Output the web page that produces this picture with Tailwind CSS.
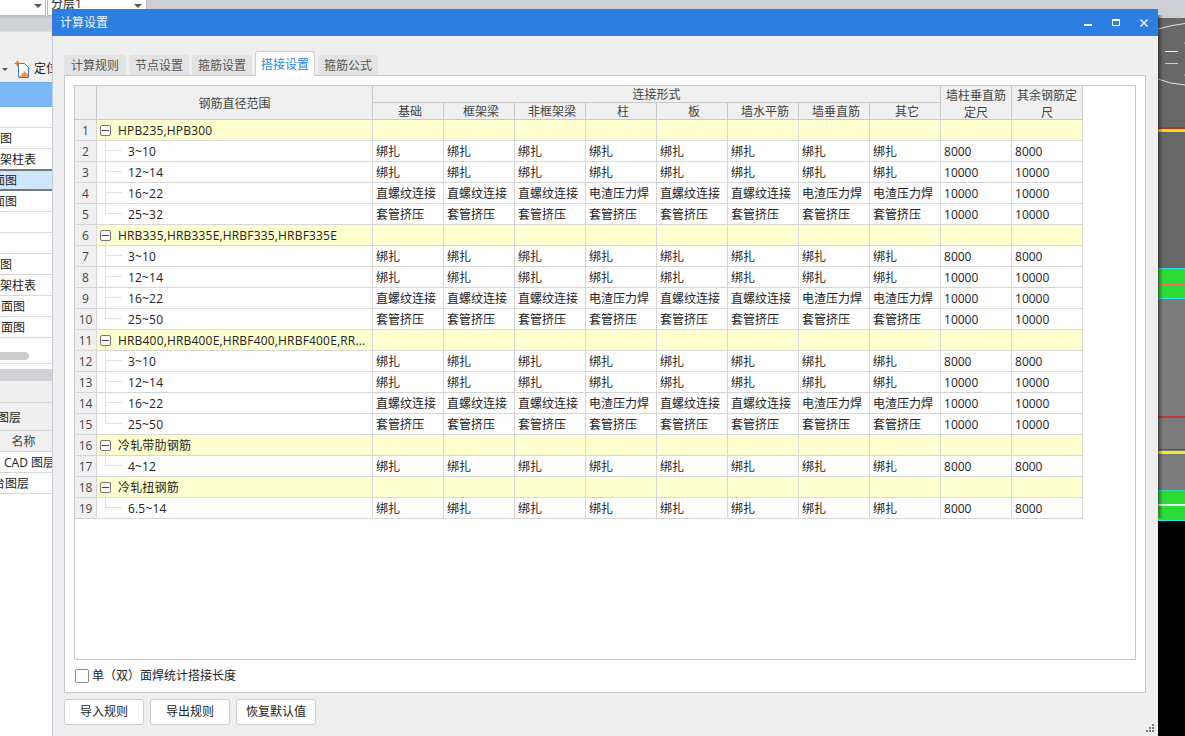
<!DOCTYPE html>
<html lang="zh-CN">
<head>
    <meta charset="UTF-8">
    <title>计算设置</title>
    <script src="https://cdn.jsdelivr.net/npm/@tailwindcss/browser@4"></script>
</head>
<body class="relative w-[1185px] h-[736px] overflow-hidden bg-[#ccced3] text-[12px] text-[#222] font-['Open_Sans','Noto_Sans_CJK_SC',sans-serif]">

    <!-- main app behind the dialog: left panel -->
    <div class="absolute left-0 top-0 w-[52px] h-[736px] overflow-hidden flex flex-col bg-white whitespace-nowrap">
        <div class="h-[18px] shrink-0 bg-white border-b-2 border-[#c4c5ca]"></div>
        <div class="h-[13px] shrink-0 bg-[#d1d2d6]"></div>
        <div class="h-[51px] shrink-0 bg-[#efefef] border-t border-[#dcdcdc] relative">
            <span class="absolute left-[2px] top-[36px] w-0 h-0 border-x-[3px] border-x-transparent border-t-[3px] border-t-[#555]"></span>
            <svg class="absolute left-[14px] top-[28px]" width="16" height="18" viewBox="0 0 16 18">
                <path d="M4.500 3.500h6l4 4v10h-10z" fill="#fff" stroke="#3d7fc4"/>
                <path d="M5 17l5-6 4 3v3z" fill="#f0924a"/>
                <path d="M6 9l4 4M5 12l3 3M9 9l4 4" stroke="#fff" stroke-width=".7"/>
                <path d="M3.500 0l1 2.500 2.500 1-2.500 1-1 2.500-1-2.500-2.500-1 2.500-1z" fill="#f26a1b"/>
            </svg>
            <span class="absolute left-[34px] top-[28px] text-[#222] text-[12px]">定位</span>
        </div>
        <div class="h-[25px] shrink-0 bg-[#7ab8f8] border-y border-[#6eaaea]"></div>
        <div class="h-[21px] shrink-0 border-b border-[#d6d6d6]"></div>
        <div class="h-[21px] shrink-0 border-b border-[#d6d6d6] leading-[21px]">图</div>
        <div class="h-[21px] shrink-0 border-b border-[#d6d6d6] leading-[21px]">架柱表</div>
        <div class="h-[22px] shrink-0 -mt-px border-y-2 border-[#777] bg-[#d0e6fc] leading-[19px] -ml-[7px]">面图</div>
        <div class="h-[21px] shrink-0 border-b border-[#d6d6d6] leading-[21px] -ml-[7px]">面图</div>
        <div class="h-[21px] shrink-0 border-b border-[#d6d6d6]"></div>
        <div class="h-[21px] shrink-0 border-b border-[#d6d6d6]"></div>
        <div class="h-[21px] shrink-0 border-b border-[#d6d6d6] leading-[21px]">图</div>
        <div class="h-[21px] shrink-0 border-b border-[#d6d6d6] leading-[21px]">架柱表</div>
        <div class="h-[21px] shrink-0 border-b border-[#d6d6d6] leading-[21px] pl-[1px]">面图</div>
        <div class="h-[21px] shrink-0 border-b border-[#d6d6d6] leading-[21px] pl-[1px]">面图</div>
        <div class="h-[26px] shrink-0 border-b border-[#d6d6d6] pt-[14px]">
            <div class="w-[29px] h-[8px] rounded-r-full bg-[#cdcdcd]"></div>
        </div>
        <div class="h-[5px] shrink-0"></div>
        <div class="h-[12px] shrink-0 bg-[#d1d2d6]"></div>
        <div class="h-[22px] shrink-0 bg-[#efefef] border-b border-[#d6d6d6]"></div>
        <div class="h-[28px] shrink-0 bg-[#efefef] border-b border-[#d6d6d6] leading-[30px] -ml-[3px]">图层</div>
        <div class="h-[21px] shrink-0 bg-[#f0f0f0] border-b border-[#d6d6d6] leading-[21px] text-center text-[#444] pr-[5px]">名称</div>
        <div class="h-[21px] shrink-0 border-b border-[#d6d6d6] leading-[21px] pl-[4px]">CAD 图层</div>
        <div class="h-[21px] shrink-0 border-b border-[#d6d6d6] leading-[21px] -ml-[7px]">台图层</div>
    </div>

    <!-- combo boxes along the top -->
    <div class="absolute left-0 top-0 w-[46px] h-[16px] bg-white border-r border-b border-[#bbb]">
        <span class="absolute left-[34px] top-[4px] w-0 h-0 border-x-[4px] border-x-transparent border-t-[4px] border-t-[#555]"></span>
    </div>
    <div class="absolute left-[47px] top-0 w-[100px] h-[16px] overflow-hidden bg-white border-x border-b border-[#bbb]">
        <span class="absolute left-[3px] -top-[5px] text-[12px] leading-[18px]">分层1</span>
        <span class="absolute left-[86px] top-[4px] w-0 h-0 border-x-[4px] border-x-transparent border-t-[4px] border-t-[#555]"></span>
    </div>

    <!-- cad canvas on the right -->
    <svg class="absolute left-[1158px] top-0" width="27" height="736" viewBox="0 0 27 736">
        <defs>
            <linearGradient id="shade" x1="0" x2="1" y1="0" y2="0">
                <stop offset="0" stop-color="#000" stop-opacity=".45"/>
                <stop offset="1" stop-color="#000" stop-opacity="0"/>
            </linearGradient>
        </defs>
        <rect y="18" width="27" height="250" fill="#676767"/>
        <rect y="268" width="27" height="252" fill="#7c7c7c"/>
        <rect y="520" width="27" height="216" fill="#000"/>
        <path d="M0 29Q14 25 27 23.500M0 79Q12 84 27 85" fill="none" stroke="#e4e4e4"/>
        <path d="M7 51.500h13" stroke="#f4f4f4"/>
        <path d="M7 63.500h13" stroke="#cfcfcf"/>
        <path d="M26 43h1M26 75h1" stroke="#bbb"/>
        <rect y="127" width="27" height="2" fill="#b4312e"/>
        <rect y="129" width="27" height="3" fill="#e8e020"/>
        <rect y="268" width="27" height="31" fill="#2cdc34"/>
        <rect y="268" width="27" height="1" fill="#30e0e8"/>
        <rect y="298" width="27" height="1" fill="#30e0e8"/>
        <rect y="283" width="27" height="2" fill="#f06a6a"/>
        <rect y="416" width="27" height="2" fill="#b83c3c"/>
        <rect y="449" width="27" height="1" fill="#e01818"/>
        <rect y="451" width="27" height="3" fill="#f4ec20"/>
        <rect y="490" width="27" height="31" fill="#2cdc34"/>
        <rect y="490" width="27" height="1" fill="#30d8b8"/>
        <rect y="520" width="27" height="1" fill="#20e8f0"/>
        <rect y="504" width="27" height="2" fill="#e8f8e8"/>
        <rect y="15" width="5" height="503" fill="url(#shade)"/>
    </svg>

    <!-- dialog -->
    <div class="absolute left-[52px] top-[9px] w-[1106px] h-[727px] flex flex-col bg-[#efefef] border-l border-[#c3cad8]">
        <div class="h-[27px] shrink-0 flex items-center justify-between -ml-px bg-[#2c7ee0] text-[#f0f6ff] pl-[8px]">
            <span>计算设置</span>
            <div class="flex items-center">
                <span class="w-[28px] flex justify-center pt-[4px]"><span class="w-[8px] h-[2px] bg-white"></span></span>
                <span class="w-[28px] flex justify-center"><span class="w-[8px] h-[7px] border border-t-2 border-white"></span></span>
                <svg class="mx-[10px]" width="8" height="8" viewBox="0 0 8 8"><path d="M.5.500l7 7M7.500.500l-7 7" stroke="#fff" stroke-width="1.200"/></svg>
            </div>
        </div>

        <div class="flex-1 flex flex-col pl-[11px] pr-[12px]">
            <!-- tabs -->
            <div class="h-[39px] shrink-0 flex items-end gap-[3px] text-[#555] relative z-10">
                <div class="w-[62px] h-[20px] rounded-t-[3px] bg-[#e3e3e3] text-center leading-[22px]">计算规则</div>
                <div class="w-[60px] h-[20px] rounded-t-[3px] bg-[#e3e3e3] text-center leading-[22px]">节点设置</div>
                <div class="w-[60px] h-[20px] rounded-t-[3px] bg-[#e3e3e3] text-center leading-[22px]">箍筋设置</div>
                <div class="w-[60px] h-[25px] -mb-px rounded-t-[3px] bg-white border-x border-t border-[#cfcfcf] text-[#2b84e6] text-center leading-[25px]">搭接设置</div>
                <div class="w-[60px] h-[20px] rounded-t-[3px] bg-[#e3e3e3] text-center leading-[22px]">箍筋公式</div>
            </div>

            <!-- panel -->
            <div class="h-[618px] shrink-0 flex flex-col bg-white border border-[#c8c8c8] px-[9px] pt-[9px]">
                <div class="h-[575px] shrink-0 border border-[#c8c8c8]">
                    <table class="table-fixed border-separate border-spacing-0 w-[1008px]
                        [&_th]:font-normal [&_th]:text-[#444] [&_th]:bg-[#f0f0f0] [&_th]:border-r [&_th]:border-b [&_th]:border-[#c8c8c8] [&_th]:p-0 [&_th]:pt-[2px] [&_th]:leading-[14px] [&_th]:h-[17px]
                        [&_td]:h-[21px] [&_td]:p-0 [&_td]:pl-[3px] [&_td]:pt-[2px] [&_td]:border-r [&_td]:border-b [&_td]:border-[#d6d6d6] [&_td]:whitespace-nowrap [&_td]:overflow-hidden
                        [&_td:nth-child(1)]:pl-0 [&_td:nth-child(1)]:text-center [&_td:nth-child(1)]:bg-[#f0f0f0] [&_td:nth-child(1)]:text-[#444]
                        [&_td:nth-child(2)]:relative [&_td:nth-child(2)]:pl-[31px] [&_td:nth-child(2)]:tracking-[0.18px]
                        [&_.g_td]:bg-[#ffffcf] [&_.g_td:nth-child(2)]:pl-[21px]
                        [&_i]:absolute [&_i]:left-[8px] [&_i]:top-0 [&_i]:w-[17px] [&_i]:h-[10px] [&_i]:border-l [&_i]:border-b [&_i]:border-[#e0e0e0]
                        [&_s]:absolute [&_s]:left-[8px] [&_s]:top-0 [&_s]:h-full [&_s]:border-l [&_s]:border-[#e0e0e0]
                        [&_.g_s]:top-[16px] [&_.g_s]:h-[5px]
                        [&_b]:absolute [&_b]:left-[3px] [&_b]:top-[5px] [&_b]:w-[11px] [&_b]:h-[11px] [&_b]:bg-white [&_b]:border [&_b]:border-[#777] [&_b]:rounded-[2px] [&_b]:flex [&_b]:items-center [&_b]:justify-center
                        [&_u]:block [&_u]:w-[7px] [&_u]:h-px [&_u]:bg-[#444]">
                        <colgroup>
                            <col class="w-[22px]"><col class="w-[276px]">
                            <col class="w-[71px]"><col class="w-[71px]"><col class="w-[71px]"><col class="w-[71px]"><col class="w-[71px]"><col class="w-[71px]"><col class="w-[71px]"><col class="w-[71px]"><col class="w-[71px]"><col class="w-[71px]">
                        </colgroup>
                        <thead>
                            <tr>
                                <th rowspan="2"></th>
                                <th rowspan="2">钢筋直径范围</th>
                                <th colspan="8" class="pr-[2px]">连接形式</th>
                                <th rowspan="2"><div class="-mt-[2px] h-[32px] leading-[17px]">墙柱垂直筋<br>定尺</div></th>
                                <th rowspan="2"><div class="-mt-[2px] h-[32px] leading-[17px]">其余钢筋定<br>尺</div></th>
                            </tr>
                            <tr class="[&_th]:pl-[4px]"><th>基础</th><th>框架梁</th><th>非框架梁</th><th>柱</th><th>板</th><th>墙水平筋</th><th>墙垂直筋</th><th>其它</th></tr>
                        </thead>
                        <tbody>
                            <tr class="g"><td>1</td><td><s></s><b><u></u></b>HPB235,HPB300</td><td></td><td></td><td></td><td></td><td></td><td></td><td></td><td></td><td></td><td></td></tr>
                            <tr><td>2</td><td><s></s><i></i>3~10</td><td>绑扎</td><td>绑扎</td><td>绑扎</td><td>绑扎</td><td>绑扎</td><td>绑扎</td><td>绑扎</td><td>绑扎</td><td>8000</td><td>8000</td></tr>
                            <tr><td>3</td><td><s></s><i></i>12~14</td><td>绑扎</td><td>绑扎</td><td>绑扎</td><td>绑扎</td><td>绑扎</td><td>绑扎</td><td>绑扎</td><td>绑扎</td><td>10000</td><td>10000</td></tr>
                            <tr><td>4</td><td><s></s><i></i>16~22</td><td>直螺纹连接</td><td>直螺纹连接</td><td>直螺纹连接</td><td>电渣压力焊</td><td>直螺纹连接</td><td>直螺纹连接</td><td>电渣压力焊</td><td>电渣压力焊</td><td>10000</td><td>10000</td></tr>
                            <tr><td>5</td><td><i></i>25~32</td><td>套管挤压</td><td>套管挤压</td><td>套管挤压</td><td>套管挤压</td><td>套管挤压</td><td>套管挤压</td><td>套管挤压</td><td>套管挤压</td><td>10000</td><td>10000</td></tr>
                            <tr class="g"><td>6</td><td><s></s><b><u></u></b>HRB335,HRB335E,HRBF335,HRBF335E</td><td></td><td></td><td></td><td></td><td></td><td></td><td></td><td></td><td></td><td></td></tr>
                            <tr><td>7</td><td><s></s><i></i>3~10</td><td>绑扎</td><td>绑扎</td><td>绑扎</td><td>绑扎</td><td>绑扎</td><td>绑扎</td><td>绑扎</td><td>绑扎</td><td>8000</td><td>8000</td></tr>
                            <tr><td>8</td><td><s></s><i></i>12~14</td><td>绑扎</td><td>绑扎</td><td>绑扎</td><td>绑扎</td><td>绑扎</td><td>绑扎</td><td>绑扎</td><td>绑扎</td><td>10000</td><td>10000</td></tr>
                            <tr><td>9</td><td><s></s><i></i>16~22</td><td>直螺纹连接</td><td>直螺纹连接</td><td>直螺纹连接</td><td>电渣压力焊</td><td>直螺纹连接</td><td>直螺纹连接</td><td>电渣压力焊</td><td>电渣压力焊</td><td>10000</td><td>10000</td></tr>
                            <tr><td>10</td><td><i></i>25~50</td><td>套管挤压</td><td>套管挤压</td><td>套管挤压</td><td>套管挤压</td><td>套管挤压</td><td>套管挤压</td><td>套管挤压</td><td>套管挤压</td><td>10000</td><td>10000</td></tr>
                            <tr class="g"><td>11</td><td><s></s><b><u></u></b>HRB400,HRB400E,HRBF400,HRBF400E,RR...</td><td></td><td></td><td></td><td></td><td></td><td></td><td></td><td></td><td></td><td></td></tr>
                            <tr><td>12</td><td><s></s><i></i>3~10</td><td>绑扎</td><td>绑扎</td><td>绑扎</td><td>绑扎</td><td>绑扎</td><td>绑扎</td><td>绑扎</td><td>绑扎</td><td>8000</td><td>8000</td></tr>
                            <tr><td>13</td><td><s></s><i></i>12~14</td><td>绑扎</td><td>绑扎</td><td>绑扎</td><td>绑扎</td><td>绑扎</td><td>绑扎</td><td>绑扎</td><td>绑扎</td><td>10000</td><td>10000</td></tr>
                            <tr><td>14</td><td><s></s><i></i>16~22</td><td>直螺纹连接</td><td>直螺纹连接</td><td>直螺纹连接</td><td>电渣压力焊</td><td>直螺纹连接</td><td>直螺纹连接</td><td>电渣压力焊</td><td>电渣压力焊</td><td>10000</td><td>10000</td></tr>
                            <tr><td>15</td><td><i></i>25~50</td><td>套管挤压</td><td>套管挤压</td><td>套管挤压</td><td>套管挤压</td><td>套管挤压</td><td>套管挤压</td><td>套管挤压</td><td>套管挤压</td><td>10000</td><td>10000</td></tr>
                            <tr class="g"><td>16</td><td><s></s><b><u></u></b>冷轧带肋钢筋</td><td></td><td></td><td></td><td></td><td></td><td></td><td></td><td></td><td></td><td></td></tr>
                            <tr><td>17</td><td><i></i>4~12</td><td>绑扎</td><td>绑扎</td><td>绑扎</td><td>绑扎</td><td>绑扎</td><td>绑扎</td><td>绑扎</td><td>绑扎</td><td>8000</td><td>8000</td></tr>
                            <tr class="g"><td>18</td><td><s></s><b><u></u></b>冷轧扭钢筋</td><td></td><td></td><td></td><td></td><td></td><td></td><td></td><td></td><td></td><td></td></tr>
                            <tr><td>19</td><td><i></i>6.5~14</td><td>绑扎</td><td>绑扎</td><td>绑扎</td><td>绑扎</td><td>绑扎</td><td>绑扎</td><td>绑扎</td><td>绑扎</td><td>8000</td><td>8000</td></tr>
                        </tbody>
                    </table>
                </div>
                <label class="flex items-center gap-[3px] pl-px h-[32px]">
                    <span class="w-[14px] h-[14px] bg-white border border-[#888] rounded-[2px]"></span>
                    <span>单（双）面焊统计搭接长度</span>
                </label>
            </div>

            <!-- buttons -->
            <div class="flex gap-[6px] mt-[6px]">
                <button class="w-[80px] h-[26px] bg-white border border-[#ccc] rounded-[3px]">导入规则</button>
                <button class="w-[80px] h-[26px] bg-white border border-[#ccc] rounded-[3px]">导出规则</button>
                <button class="w-[80px] h-[26px] bg-white border border-[#ccc] rounded-[3px]">恢复默认值</button>
            </div>
        </div>

        <!-- resize grip -->
        <svg class="absolute right-[3px] bottom-[3px]" width="9" height="9" viewBox="0 0 9 9" fill="#777">
            <rect x="6" y="0" width="2" height="2"/><rect x="3" y="3" width="2" height="2"/><rect x="6" y="3" width="2" height="2"/>
            <rect x="0" y="6" width="2" height="2"/><rect x="3" y="6" width="2" height="2"/><rect x="6" y="6" width="2" height="2"/>
        </svg>
    </div>
</body>
</html>
